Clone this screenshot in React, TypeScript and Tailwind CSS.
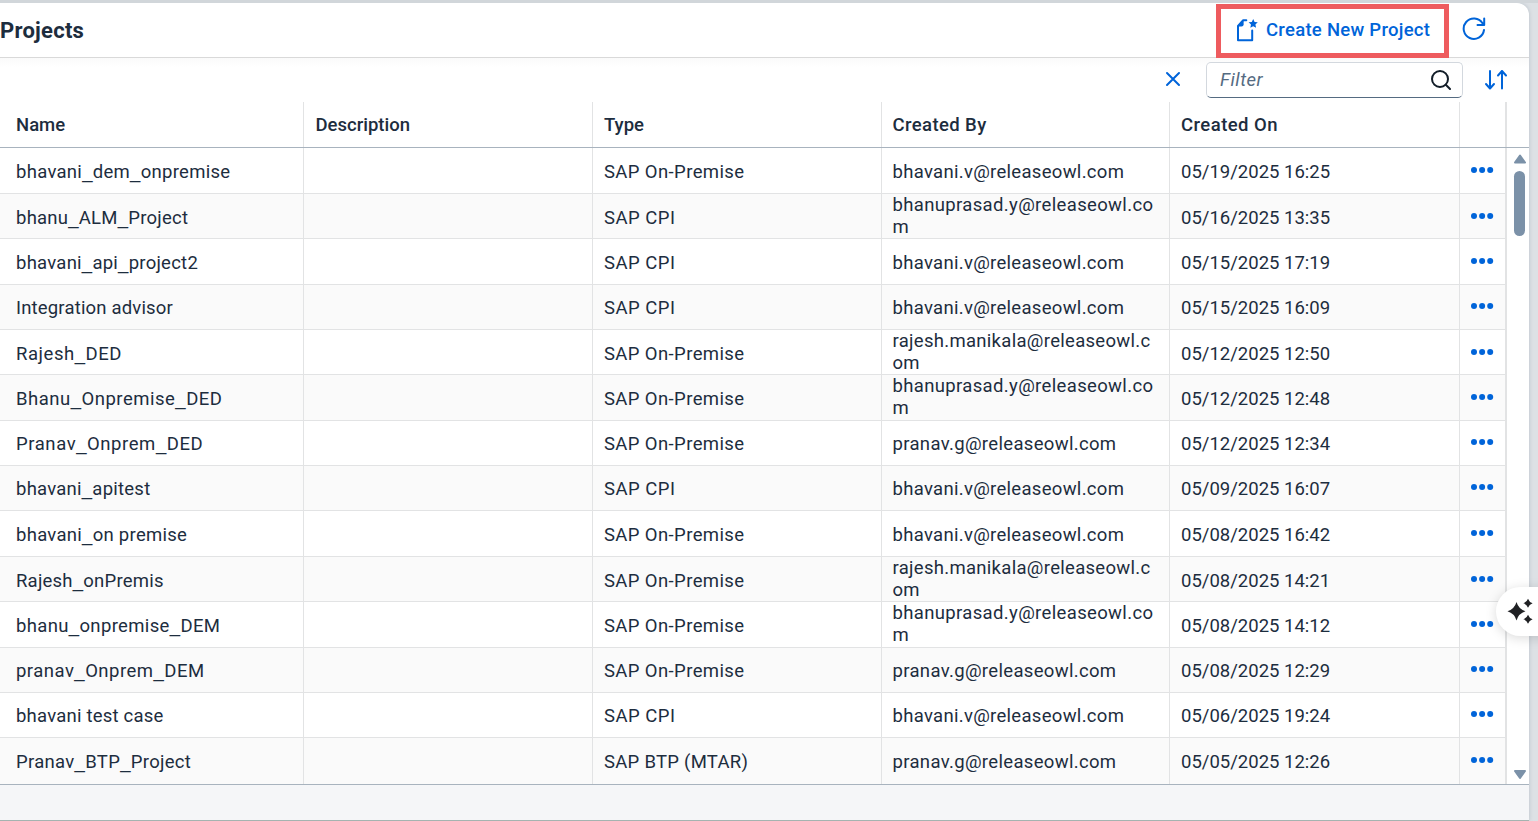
import React from 'react';

type Row = { name: string; nt: string; type: string; by: string; on: string; h: string };

const H45 = 'h-[45px]';
const H46 = 'h-[46px]';
const OP = 'SAP On-Premise';
const CPI = 'SAP CPI';
const MTAR = 'SAP BTP (MTAR)';
const bhavani = 'bhavani.v@releaseowl.com';
const bhanu = 'bhanuprasad.y@releaseowl.com';
const rajesh = 'rajesh.manikala@releaseowl.com';
const pranav = 'pranav.g@releaseowl.com';

const tracking: Record<string, string> = {
  [OP]: 'tracking-[0.39px]',
  [CPI]: 'tracking-[0.5px]',
  [MTAR]: 'tracking-[0.27px]',
  [bhavani]: 'tracking-[0.3px]',
  [bhanu]: 'tracking-[0.35px]',
  [rajesh]: 'tracking-[0.3px]',
  [pranav]: 'tracking-[0.33px]',
};

const rows: Row[] = [
  { name: 'bhavani_dem_onpremise', nt: 'tracking-[0.29px]', type: OP, by: bhavani, on: '05/19/2025 16:25', h: H46 },
  { name: 'bhanu_ALM_Project', nt: 'tracking-[0.24px]', type: CPI, by: bhanu, on: '05/16/2025 13:35', h: H45 },
  { name: 'bhavani_api_project2', nt: 'tracking-[0.25px]', type: CPI, by: bhavani, on: '05/15/2025 17:19', h: H46 },
  { name: 'Integration advisor', nt: 'tracking-[0.17px]', type: CPI, by: bhavani, on: '05/15/2025 16:09', h: H45 },
  { name: 'Rajesh_DED', nt: 'tracking-[0.55px]', type: OP, by: rajesh, on: '05/12/2025 12:50', h: H45 },
  { name: 'Bhanu_Onpremise_DED', nt: 'tracking-[0.5px]', type: OP, by: bhanu, on: '05/12/2025 12:48', h: H46 },
  { name: 'Pranav_Onprem_DED', nt: 'tracking-[0.57px]', type: OP, by: pranav, on: '05/12/2025 12:34', h: H45 },
  { name: 'bhavani_apitest', nt: 'tracking-[0.24px]', type: CPI, by: bhavani, on: '05/09/2025 16:07', h: H45 },
  { name: 'bhavani_on premise', nt: 'tracking-[0.28px]', type: OP, by: bhavani, on: '05/08/2025 16:42', h: H46 },
  { name: 'Rajesh_onPremis', nt: 'tracking-[0.22px]', type: OP, by: rajesh, on: '05/08/2025 14:21', h: H45 },
  { name: 'bhanu_onpremise_DEM', nt: 'tracking-[0.35px]', type: OP, by: bhanu, on: '05/08/2025 14:12', h: H46 },
  { name: 'pranav_Onprem_DEM', nt: 'tracking-[0.48px]', type: OP, by: pranav, on: '05/08/2025 12:29', h: H45 },
  { name: 'bhavani test case', nt: 'tracking-[0.22px]', type: CPI, by: bhavani, on: '05/06/2025 19:24', h: H45 },
  { name: 'Pranav_BTP_Project', nt: 'tracking-[0.31px]', type: MTAR, by: pranav, on: '05/05/2025 12:26', h: H46 },
];

const GRID = 'grid grid-cols-[304px_289px_289px_288px_290px_47px]';
const CELL = 'flex min-w-0 items-center border-r border-[#e2e3e4]';

function Name({ text }: { text: string }) {
  return (
    <span>
      {text.split('_').map((part, i) => (
        <React.Fragment key={i}>
          {i > 0 && <span className="font-['Liberation_Sans',sans-serif] leading-none">_</span>}
          {part}
        </React.Fragment>
      ))}
    </span>
  );
}

function CreateIcon() {
  return (
    <svg width="24" height="24" viewBox="0 0 24 24" fill="none">
      <path d="M11.3 1.2H8.2L3 7V21.2H17.2V11.6" stroke="#0064d9" strokeWidth="2" strokeLinejoin="round" strokeLinecap="round" />
      <path d="M3 7.6H6.5Q8.6 7.6 8.6 5.5V1.2Z" fill="#0064d9" />
      <path d="M18.2 0l1.4 2.9 3.2.4-2.4 2.2.7 3.3-2.9-1.6-2.9 1.6.7-3.3-2.4-2.2 3.2-.4z" fill="#0064d9" />
    </svg>
  );
}

function RefreshIcon() {
  return (
    <svg width="24" height="24" viewBox="0 0 24 24" fill="none" stroke="#0064d9" strokeWidth="2" strokeLinecap="round" strokeLinejoin="round">
      <path d="M22 14A10.2 10.2 0 1 1 20.5 7.2L22 9M22.2 2.5V9H15.5" />
    </svg>
  );
}

function Dots() {
  return (
    <svg className="mb-[2px] mr-[2px]" width="24" height="8" viewBox="0 0 24 8" fill="#0064d9">
      <circle cx="4" cy="4" r="3" />
      <circle cx="12.1" cy="4" r="3" />
      <circle cx="20.2" cy="4" r="3" />
    </svg>
  );
}

function Toolbar() {
  return (
    <div className="flex h-[44px] items-start bg-gradient-to-b from-[#fafafa] to-white to-20%">
      <svg className="ml-[1165px] mt-[13px] shrink-0" width="16" height="16" viewBox="0 0 16 16" stroke="#0064d9" strokeWidth="2" strokeLinecap="round">
        <path d="M2 2L14 14M14 2L2 14" />
      </svg>
      <div className="ml-[25px] mt-[4px] flex h-[36px] w-[257px] shrink-0 items-center justify-between rounded-[5px] border border-b-[#556b81] border-[#d3d8de] bg-white pl-[13px] pr-[11px]">
        <span className="text-[18.5px] italic leading-[22px] tracking-[0.5px] text-[#556b82]">Filter</span>
        <svg className="mb-px" width="20" height="20" viewBox="0 0 20 20" fill="none" stroke="#131e29" strokeWidth="2" strokeLinecap="round">
          <circle cx="9" cy="9" r="8" />
          <path d="M14.8 14.8L19 19" />
        </svg>
      </div>
      <svg className="ml-[21px] mt-[11px] shrink-0" width="24" height="22" viewBox="0 0 24 22" fill="none" stroke="#0064d9" strokeWidth="2" strokeLinecap="round" strokeLinejoin="round">
        <path d="M6 2V19M2 15L6 19.5L10 15M18 19.5V2M14 6.5L18 2L22 6.5" />
      </svg>
    </div>
  );
}

function Scrollbar() {
  return (
    <div className="flex w-[22px] flex-col items-center justify-between pb-[4px] pl-[3px] pt-[6px]">
      <div className="flex flex-col items-center gap-[7px]">
        <svg width="14" height="10" viewBox="0 0 14 10" fill="#7b91a8" stroke="#7b91a8" strokeWidth="2" strokeLinejoin="round">
          <path d="M7 1.5L12 8.5H2Z" />
        </svg>
        <div className="h-[65px] w-[11px] rounded-full bg-[#7b91a8]" />
      </div>
      <svg width="14" height="11" viewBox="0 0 14 10" fill="#7b91a8" stroke="#7b91a8" strokeWidth="2" strokeLinejoin="round">
        <path d="M7 8.5L12 1.5H2Z" />
      </svg>
    </div>
  );
}

export default function App() {
  return (
    <div className="relative h-[821px] w-[1538px] overflow-hidden bg-[#dde1e5] pt-[3px] font-['Roboto','Liberation_Sans',sans-serif] text-[#1d2d3e]">
      <div className="absolute left-0 top-0 h-[3px] w-full bg-[#d1d6da]" />
      <div className="flex h-[818px] w-[1529px] flex-col overflow-hidden rounded-tr-[12px] bg-white shadow-[0_0_4px_#b9c1c9]">
        <header className="flex h-[55px] shrink-0 border-b border-[#d9d9d9]">
          <h1 className="mt-[14px] w-[1216px] text-[22px] font-bold leading-[27px] tracking-[0.25px]">Projects</h1>
          <button className="relative z-10 mt-px flex h-[54px] w-[233px] shrink-0 items-center border-[5px] border-[#ee5b5e] pl-[14px]">
            <CreateIcon />
            <span className="mb-[2px] ml-[7px] whitespace-nowrap text-[18.5px] font-medium leading-[22px] tracking-[0.27px] text-[#0064d9]">Create New Project</span>
          </button>
          <div className="ml-[13px] mt-[13px]"><RefreshIcon /></div>
        </header>
        <Toolbar />
        <div className={`${GRID} h-[45px] shrink-0 text-[18.5px] font-medium`}>
          <div className="flex items-center border-r border-[#e2e3e4] pl-4 pt-[2px]">Name</div>
          <div className={`${CELL} pl-[11.5px] pt-[2px]`}>Description</div>
          <div className={`${CELL} pl-[11px] pt-[2px]`}>Type</div>
          <div className={`${CELL} pl-[10.5px] pt-[2px] tracking-[0.4px]`}>Created By</div>
          <div className={`${CELL} pl-[11px] pt-[2px] tracking-[0.45px]`}>Created On</div>
          <div className="border-r-2 border-[#e2e3e4]" />
        </div>
        <div className="flex h-[638px] shrink-0 border-y border-[#a8b3be]">
          <div>
            {rows.map((r, i) => {
              const wraps = r.by === bhanu || r.by === rajesh;
              return (
                <div key={i} className={`${GRID} ${r.h} ${i % 2 ? 'bg-[#fafafa]' : 'bg-white'} ${i === rows.length - 1 ? '' : 'border-b border-[#e2e3e4]'} text-[18.5px] leading-[22px]`}>
                  <div className={`flex items-center border-r border-[#e2e3e4] pl-4 pt-[2px] ${r.nt}`}><Name text={r.name} /></div>
                  <div className={CELL} />
                  <div className={`${CELL} pl-[11px] pt-[2px] ${tracking[r.type]}`}>{r.type}</div>
                  <div className={`${CELL} pl-[10.5px] ${wraps ? 'pb-px' : 'pt-[2px]'} ${tracking[r.by]}`}>
                    <span className="w-[264px] break-all">{r.by}</span>
                  </div>
                  <div className={`${CELL} pl-[11px] pt-[2px]`}>{r.on}</div>
                  <div className="flex items-center justify-center border-r-2 border-[#e2e3e4]"><Dots /></div>
                </div>
              );
            })}
          </div>
          <Scrollbar />
        </div>
        <footer className="h-[36px] shrink-0 border-b border-[#a5b3b0] bg-[#f5f6f8]" />
      </div>
      <div className="absolute left-[1496px] top-[587px] flex h-[49px] w-[60px] items-center rounded-l-full bg-white pl-[11px] shadow-[0_2px_12px_rgba(0,0,0,0.15)]">
        <svg width="27" height="27" viewBox="0 0 27 27" fill="#202124">
          <path d="M9.5 4Q11.5 11 18.5 13.3Q11.5 15.5 9.5 22.5Q7.5 15.5.5 13.3Q7.5 11 9.5 4Z" />
          <path d="M21 .8Q22.2 4.2 25.6 5.3Q22.2 6.4 21 9.8Q19.8 6.4 16.4 5.3Q19.8 4.2 21 .8Z" />
          <path d="M21 16.8Q22.2 20.2 25.6 21.3Q22.2 22.4 21 25.8Q19.8 22.4 16.4 21.3Q19.8 20.2 21 16.8Z" />
        </svg>
      </div>
    </div>
  );
}
